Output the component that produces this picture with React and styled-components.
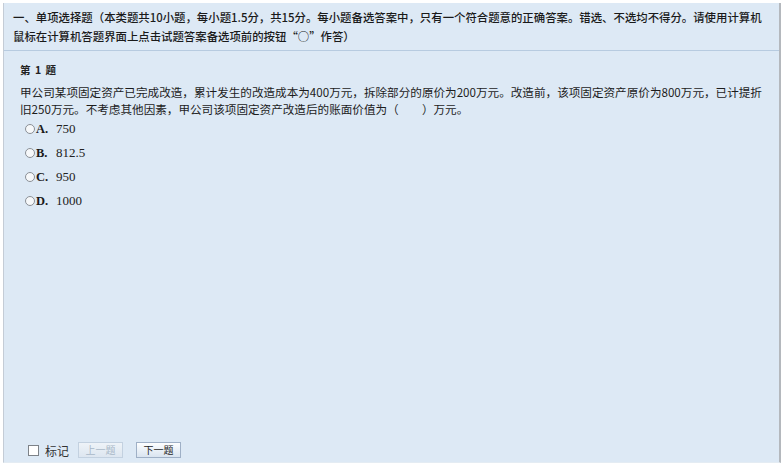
import React from 'react'
import styled, { createGlobalStyle } from 'styled-components'

const GlobalStyle = createGlobalStyle`
  html, body {
    margin: 0;
    padding: 0;
    background: #ffffff;
  }
  body {
    font-family: "Noto Sans CJK SC", "Noto Sans", sans-serif;
    color: #1c1c1c;
  }
`

const Page = styled.div`
  padding: 3px 3px 4px 3px;
  width: 784px;
  height: 467px;
  box-sizing: border-box;
`
const Frame = styled.div`
  display: flex;
  flex-direction: column;
  height: 460px;
  box-sizing: border-box;
  background: #dde9f5;
  border-left: 1px solid #c4ccd6;
  border-right: 2px solid #b4b8bd;
  border-bottom: 1px solid #e4ecf3;
`
const Header = styled.div`
  padding: 5px 8px 4px 9px;
  border-bottom: 1px solid #b7cbe0;
  font-size: 11.4px;
  line-height: 19px;
  font-weight: 500;
  color: #1a1a1a;
  white-space: nowrap;
`
const Body = styled.div`
  display: flex;
  flex-direction: column;
  padding: 11px 6px 0 16px;
`
const Number = styled.div`
  font-size: 10.5px;
  line-height: 16px;
  font-weight: 700;
  color: #222;
  margin-bottom: 6px;
  word-spacing: 2px;
`
const Stem = styled.div`
  font-size: 11.6px;
  line-height: 17px;
  color: #1c1c1c;
  white-space: nowrap;
`
const Options = styled.div`
  display: flex;
  flex-direction: column;
  margin-top: -1px;
`
const Option = styled.label`
  display: flex;
  align-items: center;
  height: 24px;
  padding-left: 5px;
  cursor: pointer;
`
const Radio = styled.span`
  width: 8px;
  height: 8px;
  border-radius: 50%;
  border: 1px solid #8a8f96;
  background: #f6f8fa;
  margin-right: 1px;
`
const Letter = styled.span`
  font-family: "Liberation Serif", serif;
  font-weight: 700;
  font-size: 12.5px;
  width: 20px;
  color: #1a1a1a;
`
const Value = styled.span`
  font-family: "Liberation Serif", serif;
  font-size: 13px;
  color: #222;
`
const Footer = styled.div`
  margin-top: auto;
  display: flex;
  align-items: center;
  height: 24px;
  padding-left: 24px;
`
const Check = styled.span`
  width: 9px;
  height: 9px;
  border: 1px solid #7d8288;
  background: #ffffff;
  margin-right: 6px;
`
const Mark = styled.span`
  font-size: 12px;
  color: #333;
  margin-right: 9px;
`
const Button = styled.button`
  width: 45px;
  height: 16px;
  padding: 0;
  margin-right: 13px;
  font-family: inherit;
  font-size: 10px;
  line-height: 14px;
  border: 1px solid ${(p) => (p.disabled ? '#c3d1e0' : '#9fb0c6')};
  background: ${(p) =>
    p.disabled
      ? 'linear-gradient(#eef3f8, #dde6f0)'
      : 'linear-gradient(#fdfeff, #d9e4f0)'};
  color: ${(p) => (p.disabled ? '#a9b8c8' : '#1e1e1e')};
`

const options = [
  { key: 'A', value: '750' },
  { key: 'B', value: '812.5' },
  { key: 'C', value: '950' },
  { key: 'D', value: '1000' },
]

export default function App() {
  return (
    <Page>
      <GlobalStyle />
      <Frame>
        <Header>
          一、单项选择题（本类题共10小题，每小题1.5分，共15分。每小题备选答案中，只有一个符合题意的正确答案。错选、不选均不得分。请使用计算机
          <br />
          鼠标在计算机答题界面上点击试题答案备选项前的按钮“○”作答）
        </Header>
        <Body>
          <Number>第 1 题</Number>
          <Stem>
            甲公司某项固定资产已完成改造，累计发生的改造成本为400万元，拆除部分的原价为200万元。改造前，该项固定资产原价为800万元，已计提折
            <br />
            旧250万元。不考虑其他因素，甲公司该项固定资产改造后的账面价值为（　　）万元。
          </Stem>
          <Options>
            {options.map((o) => (
              <Option key={o.key}>
                <Radio />
                <Letter>{o.key}.</Letter>
                <Value>{o.value}</Value>
              </Option>
            ))}
          </Options>
        </Body>
        <Footer>
          <Check />
          <Mark>标记</Mark>
          <Button disabled>上一题</Button>
          <Button>下一题</Button>
        </Footer>
      </Frame>
    </Page>
  )
}
